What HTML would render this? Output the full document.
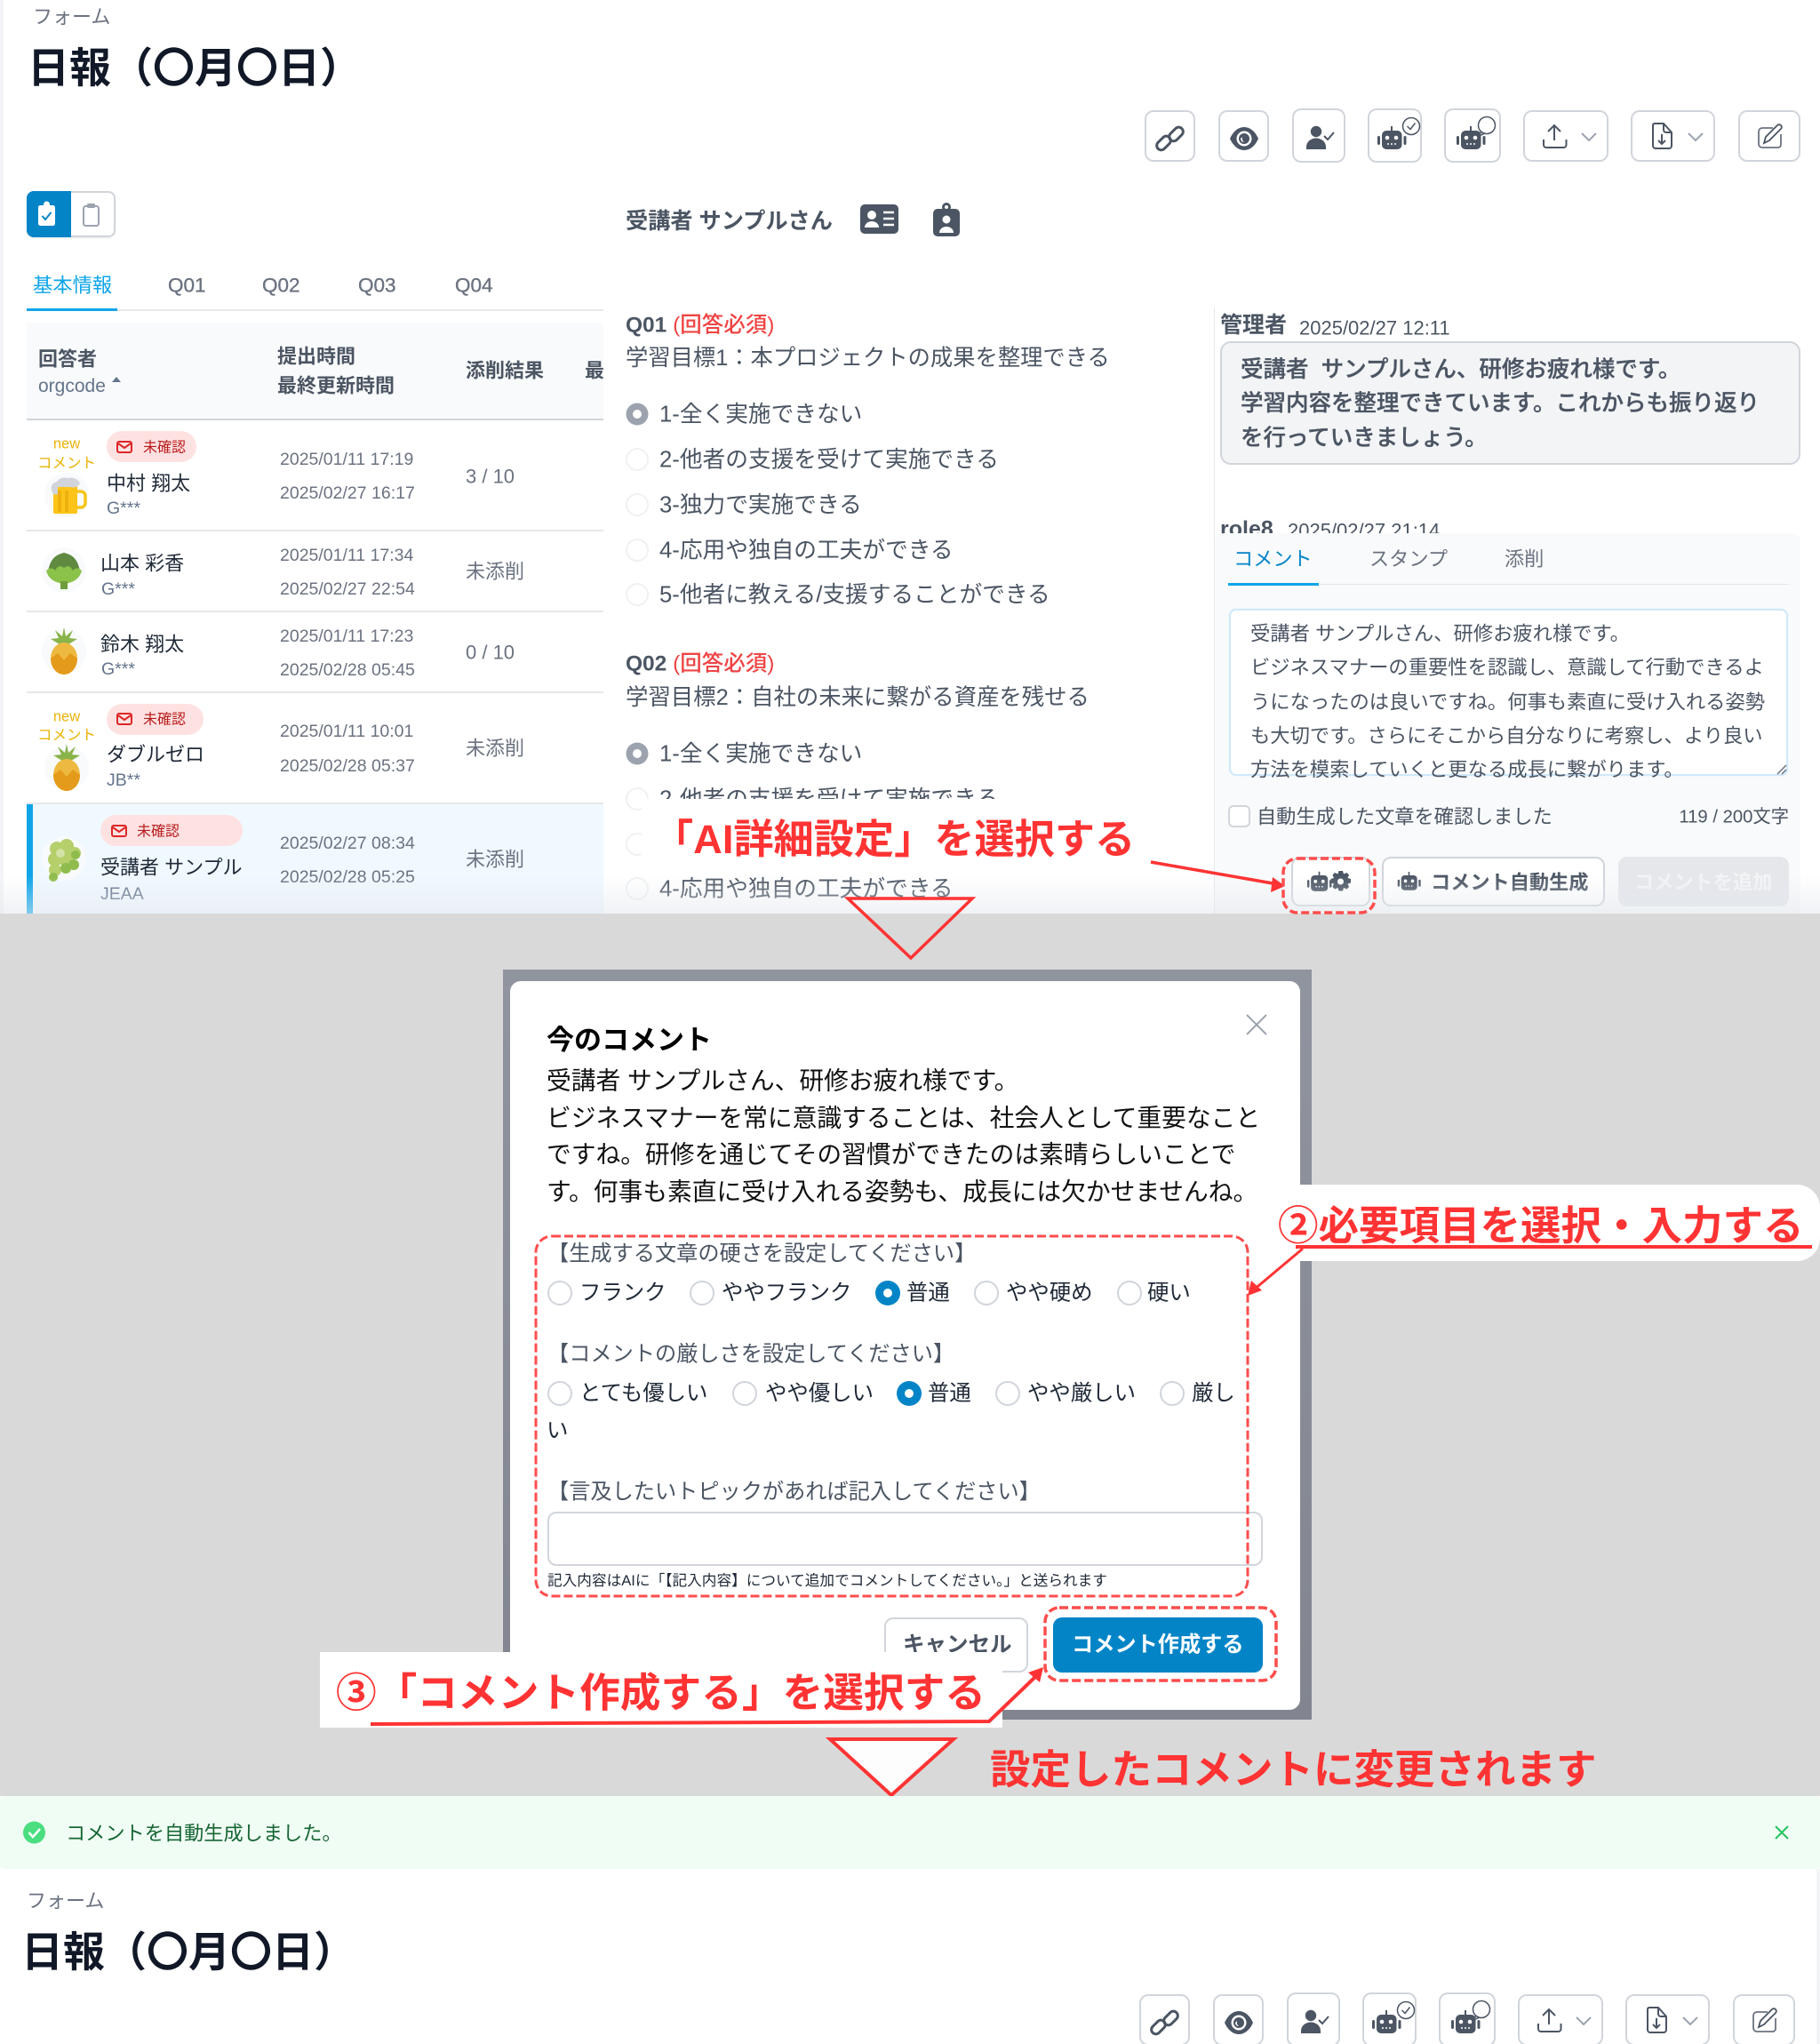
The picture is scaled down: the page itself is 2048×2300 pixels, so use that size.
<!DOCTYPE html>
<html lang="ja"><head><meta charset="utf-8"><title>日報</title>
<style>
html,body{margin:0;padding:0}
body{width:2048px;height:2300px;position:relative;overflow:hidden;background:#fff;font-family:"Liberation Sans","Noto Sans CJK JP",sans-serif;color:#4b5563}
.t{position:absolute;white-space:nowrap;line-height:1;transform:translateY(calc(-50% + 1.5px))}
.b{font-weight:700}
.m{font-weight:500;-webkit-text-stroke:.35px currentColor}
.box{position:absolute;box-sizing:border-box}
svg{position:absolute;left:0;top:0;overflow:visible}
.q{font-size:25.7px;left:742px;color:#4b5563}
.d{font-size:19.5px;left:315px;color:#6b7280}
.n{font-size:22px;color:#1f2937}
.g{font-size:19.5px;color:#64748b}
.r{font-size:22px;left:524px;color:#6b7280}
.h{font-size:22px;font-weight:700;color:#4b5563}
.new{font-size:16.5px;color:#eab308;width:70px;text-align:center;left:40px}
.bd{font-size:16px;color:#b91c1c}
.mr{font-size:24.4px;color:#1f2937}
.lb{font-size:24.2px;color:#4b5563}
.an{color:#ff3333;font-weight:700;font-size:45px}
</style></head><body>

<!-- left strip -->
<div class="box" style="left:0;top:0;width:4px;height:1028px;background:#f3f4f6"></div>

<!-- page header -->
<div class="t" style="left:37px;top:18px;font-size:22px;color:#6b7280">フォーム</div>
<div class="t b" style="left:31px;top:75px;font-size:47px;color:#111827">日報（〇月〇日）</div>

<!-- toggle -->
<div class="box" style="left:30px;top:215px;width:100px;height:52px;border-radius:8px;border:2px solid #d1d5db;background:#fff;box-shadow:0 1px 2px rgba(0,0,0,.08)"></div>
<div class="box" style="left:30px;top:215px;width:50px;height:52px;border-radius:8px 0 0 8px;background:#0284c7"></div>

<!-- presenter -->
<div class="t b" style="left:704px;top:248px;font-size:25.2px;color:#4b5563">受講者 サンプルさん</div>

<!-- tabs -->
<div class="t" style="left:37px;top:320px;font-size:22.3px;color:#0ea5e9">基本情報</div>
<div class="t m" style="left:189px;top:320px;font-size:22.5px;color:#6b7280">Q01</div>
<div class="t m" style="left:295px;top:320px;font-size:22.5px;color:#6b7280">Q02</div>
<div class="t m" style="left:403px;top:320px;font-size:22.5px;color:#6b7280">Q03</div>
<div class="t m" style="left:512px;top:320px;font-size:22.5px;color:#6b7280">Q04</div>
<div class="box" style="left:30px;top:348px;width:649px;height:2px;background:#e5e7eb"></div>
<div class="box" style="left:30px;top:347px;width:102px;height:3px;background:#0ea5e9"></div>

<!-- table -->
<div class="box" style="left:30px;top:363px;width:649px;height:108px;background:#f9fafb"></div>
<div class="box" style="left:30px;top:471px;width:649px;height:2px;background:#d1d5db"></div>
<div class="box" style="left:30px;top:596px;width:649px;height:2px;background:#e5e7eb"></div>
<div class="box" style="left:30px;top:687px;width:649px;height:2px;background:#e5e7eb"></div>
<div class="box" style="left:30px;top:778px;width:649px;height:2px;background:#e5e7eb"></div>
<div class="box" style="left:30px;top:903px;width:649px;height:2px;background:#e5e7eb"></div>
<div class="box" style="left:30px;top:905px;width:649px;height:123px;background:#f0f9ff"></div>
<div class="box" style="left:30px;top:905px;width:7px;height:123px;background:#0ea5e9"></div>

<div class="t h" style="left:43px;top:403px">回答者</div>
<div class="t" style="left:43px;top:433px;font-size:21px;color:#64748b">orgcode</div>
<div class="t h" style="left:312px;top:400px">提出時間</div>
<div class="t h" style="left:312px;top:433px">最終更新時間</div>
<div class="t h" style="left:524px;top:416px">添削結果</div>
<div style="position:absolute;left:658px;top:400px;width:21px;height:34px;overflow:hidden"><span class="t h" style="left:0;top:16px">最終</span></div>

<div class="t new" style="top:498px">new</div><div class="t new" style="top:520px">コメント</div>
<div class="box" style="left:120px;top:485px;width:101px;height:35px;border-radius:18px;background:#fee2e2"></div>
<div class="t bd" style="left:161px;top:503px">未確認</div>
<div class="t n" style="left:120px;top:543px">中村 翔太</div><div class="t g" style="left:120px;top:571px">G***</div>

<div class="t n" style="left:113px;top:633px">山本 彩香</div><div class="t g" style="left:114px;top:662px">G***</div>
<div class="t n" style="left:113px;top:724px">鈴木 翔太</div><div class="t g" style="left:114px;top:752px">G***</div>

<div class="t new" style="top:805px">new</div><div class="t new" style="top:826px">コメント</div>
<div class="box" style="left:120px;top:792px;width:109px;height:35px;border-radius:18px;background:#fee2e2"></div>
<div class="t bd" style="left:161px;top:809px">未確認</div>
<div class="t n" style="left:120px;top:848px">ダブルゼロ</div><div class="t g" style="left:120px;top:877px">JB**</div>

<div class="box" style="left:113px;top:917px;width:160px;height:35px;border-radius:18px;background:#fee2e2"></div>
<div class="t bd" style="left:154px;top:935px">未確認</div>
<div class="t n" style="left:113px;top:975px">受講者 サンプル</div><div class="t g" style="left:113px;top:1005px">JEAA</div>

<div class="t d" style="top:516px">2025/01/11 17:19</div><div class="t d" style="top:554px">2025/02/27 16:17</div>
<div class="t d" style="top:624px">2025/01/11 17:34</div><div class="t d" style="top:662px">2025/02/27 22:54</div>
<div class="t d" style="top:715px">2025/01/11 17:23</div><div class="t d" style="top:753px">2025/02/28 05:45</div>
<div class="t d" style="top:822px">2025/01/11 10:01</div><div class="t d" style="top:861px">2025/02/28 05:37</div>
<div class="t d" style="top:948px">2025/02/27 08:34</div><div class="t d" style="top:986px">2025/02/28 05:25</div>

<div class="t r" style="top:535px">3 / 10</div>
<div class="t r" style="top:642px">未添削</div>
<div class="t r" style="top:733px">0 / 10</div>
<div class="t r" style="top:841px">未添削</div>
<div class="t r" style="top:966px">未添削</div>

<!-- questions -->
<div class="t b" style="left:704px;top:365px;font-size:24.5px;color:#4b5563">Q01 <span style="color:#ef4444;font-weight:500">(回答必須)</span></div>
<div class="t" style="left:704px;top:402px;font-size:25.3px">学習目標1：本プロジェクトの成果を整理できる</div>
<div class="t q" style="top:466px">1-全く実施できない</div>
<div class="t q" style="top:517px">2-他者の支援を受けて実施できる</div>
<div class="t q" style="top:568px">3-独力で実施できる</div>
<div class="t q" style="top:619px">4-応用や独自の工夫ができる</div>
<div class="t q" style="top:669px">5-他者に教える/支援することができる</div>
<div class="t b" style="left:704px;top:746px;font-size:24.5px;color:#4b5563">Q02 <span style="color:#ef4444;font-weight:500">(回答必須)</span></div>
<div class="t" style="left:704px;top:784px;font-size:25.4px">学習目標2：自社の未来に繋がる資産を残せる</div>
<div class="t q" style="top:848px">1-全く実施できない</div>
<div class="t q" style="top:899px">2-他者の支援を受けて実施できる</div>
<div class="t q" style="top:1000px">4-応用や独自の工夫ができる</div>

<!-- right column -->
<div class="box" style="left:1366px;top:346px;width:1px;height:682px;background:#e5e7eb"></div>
<div class="t b" style="left:1373px;top:365px;font-size:25px">管理者</div>
<div class="t" style="left:1462px;top:368px;font-size:22px">2025/02/27 12:11</div>
<div class="box" style="left:1373px;top:384px;width:653px;height:139px;background:#f3f4f6;border:2px solid #d1d5db;border-radius:12px"></div>
<div class="t m" style="left:1396px;top:415px;font-size:25.5px">受講者&nbsp; サンプルさん、研修お疲れ様です。</div>
<div class="t m" style="left:1396px;top:453px;font-size:25.5px">学習内容を整理できています。これからも振り返り</div>
<div class="t m" style="left:1396px;top:492px;font-size:25.5px">を行っていきましょう。</div>
<div class="t b" style="left:1373px;top:594px;font-size:25px;line-height:1.2">role8</div>
<div class="t" style="left:1449px;top:596px;font-size:22px">2025/02/27 21:14</div>

<div class="box" style="left:1367px;top:600px;width:659px;height:428px;background:#f9fafb;border-radius:10px 10px 0 0"></div>
<div class="t" style="left:1388px;top:628px;font-size:22.2px;color:#0284c7">コメント</div>
<div class="t" style="left:1541px;top:628px;font-size:22.2px;color:#6b7280">スタンプ</div>
<div class="t" style="left:1693px;top:628px;font-size:22.2px;color:#6b7280">添削</div>
<div class="box" style="left:1382px;top:657px;width:631px;height:1px;background:#e5e7eb"></div>
<div class="box" style="left:1382px;top:656px;width:102px;height:3px;background:#0ea5e9"></div>
<div class="box" style="left:1383px;top:685px;width:629px;height:188px;background:#fff;border:2px solid #cfe8fa;border-radius:8px;box-shadow:0 0 2px #e0f2fe"></div>
<div style="position:absolute;left:1383px;top:685px;width:629px;height:190px;overflow:hidden">
<div class="t" style="left:24px;top:27px;font-size:22.3px">受講者 サンプルさん、研修お疲れ様です。</div>
<div class="t" style="left:24px;top:65px;font-size:22.3px">ビジネスマナーの重要性を認識し、意識して行動できるよ</div>
<div class="t" style="left:24px;top:104px;font-size:22.3px">うになったのは良いですね。何事も素直に受け入れる姿勢</div>
<div class="t" style="left:24px;top:142px;font-size:22.3px">も大切です。さらにそこから自分なりに考察し、より良い</div>
<div class="t" style="left:24px;top:180px;font-size:22.3px">方法を模索していくと更なる成長に繋がります。</div>
</div>
<div class="box" style="left:1382px;top:906px;width:25px;height:25px;background:#fff;border:2px solid #d1d5db;border-radius:6px"></div>
<div class="t" style="left:1414px;top:918px;font-size:22.2px">自動生成した文章を確認しました</div>
<div class="t" style="right:35px;top:918px;font-size:20.3px">119 / 200文字</div>

<div class="box" style="left:1453px;top:964px;width:89px;height:56px;background:#fff;border:2px solid #d1d5db;border-radius:10px"></div>
<div class="box" style="left:1555px;top:964px;width:251px;height:56px;background:#fff;border:2px solid #d1d5db;border-radius:10px"></div>
<div class="t b" style="left:1610px;top:992px;font-size:22.2px">コメント自動生成</div>
<div class="box" style="left:1821px;top:964px;width:192px;height:56px;background:#e5e7eb;border-radius:10px"></div>
<div class="t b" style="left:1839px;top:992px;font-size:22.2px;color:#f3f4f6">コメントを追加</div>

<!-- icons and shapes -->
<svg width="2048" height="2300" viewBox="0 0 2048 2300">
<defs>
<g id="rb" fill="#4b5563">
<rect x="-1" y="-5" width="2" height="6"/>
<rect x="-11" y="0" width="22.5" height="21" rx="5"/>
<rect x="-16" y="6" width="3" height="10" rx="1.5"/>
<rect x="13.5" y="6" width="3" height="10" rx="1.5"/>
<circle cx="-5" cy="8" r="2.3" fill="#fff"/><circle cx="5" cy="8" r="2.3" fill="#fff"/>
<circle cx="-4" cy="15" r="1" fill="#fff"/><circle cx="0" cy="15" r="1" fill="#fff"/><circle cx="4" cy="15" r="1" fill="#fff"/>
</g>
<g id="mail" fill="none" stroke="#dc2626" stroke-width="2">
<rect x="0" y="0" width="16" height="12" rx="2"/><path d="M1 2 L8 7 L15 2"/>
</g>
<g id="pine">
<path d="M0 -5 L-15 -14 L-6 -15 L-10 -24 L-2 -17 L0 -27 L2 -17 L10 -24 L6 -15 L15 -14Z" fill="#8ab44a"/>
<ellipse cx="0" cy="8" rx="15" ry="18" fill="#eeb940"/>
<path d="M-15 8 A15 18 0 0 0 15 8 L7 2 L0 10 L-7 2Z" fill="#e49a1b"/>
</g>
<g id="tb">
<g fill="#fff" stroke="#d1d5db" stroke-width="2">
<rect x="1289" y="125" width="55" height="56" rx="9"/>
<rect x="1372" y="125" width="55" height="56" rx="9"/>
<rect x="1455" y="123" width="58" height="59" rx="9"/>
<rect x="1540" y="123" width="59" height="59" rx="9"/>
<rect x="1626" y="123" width="62" height="59" rx="9"/>
<rect x="1715" y="125" width="94" height="56" rx="9"/>
<rect x="1836" y="125" width="93" height="56" rx="9"/>
<rect x="1957" y="125" width="68" height="56" rx="9"/>
</g>
<g fill="none" stroke="#4b5563" stroke-width="3">
<rect x="1300.500" y="156" width="18" height="10" rx="5" transform="rotate(-45 1309.500 161)"/>
<rect x="1314.500" y="146" width="18" height="10" rx="5" transform="rotate(-45 1323.500 151)"/>
</g>
<path d="M1384 156 C1388 147 1394 143 1400 143 C1406 143 1412 147 1416 156 C1412 165 1406 169 1400 169 C1394 169 1388 165 1384 156Z" fill="#4b5563"/>
<circle cx="1400" cy="156" r="8.500" fill="#fff"/><circle cx="1400" cy="156" r="6" fill="#4b5563"/>
<path d="M1396 156 a4 4 0 0 0 4 4 a6 6 0 0 1 -2 -6z" fill="#fff"/>
<circle cx="1481" cy="148" r="6.200" fill="#4b5563"/>
<path d="M1470 168 v-3 a11 9.500 0 0 1 22 0 v3z" fill="#4b5563"/>
<path d="M1490 153 l4 4 l7 -8" fill="none" stroke="#4b5563" stroke-width="2"/>
<use href="#rb" x="1566" y="147"/>
<circle cx="1588" cy="142" r="9.500" fill="#fff" stroke="#4b5563" stroke-width="1.500"/>
<path d="M1583.500 142 l3.500 3.500 l5.500 -7" fill="none" stroke="#4b5563" stroke-width="1.500"/>
<use href="#rb" x="1655" y="147"/>
<path d="M1667 148 L1664 153 L1671 150" fill="#fff" stroke="#4b5563" stroke-width="1.500"/>
<circle cx="1673" cy="141" r="9.500" fill="#fff" stroke="#4b5563" stroke-width="1.500"/>
<path d="M1749 158 V141 M1742 148 L1749 141 L1756 148 M1737 157 v6 a3 3 0 0 0 3 3 h19.500 a3 3 0 0 0 3 -3 v-6" fill="none" stroke="#4b5563" stroke-width="2"/>
<path d="M1780 150 l8 8 l8 -8 M1900 150 l8 8 l8 -8" fill="none" stroke="#9ca3af" stroke-width="2"/>
<path d="M1860 141 q0 -2 2 -2 h10 l9 10 v15 a3 3 0 0 1 -3 3 h-15 a3 3 0 0 1 -3 -3z M1872 139 v7 a3 3 0 0 0 3 3 h6 M1870 151 v11 M1866 158 l4 4 l4 -4" fill="none" stroke="#4b5563" stroke-width="2"/>
<path d="M1995 144 h-12 a4 4 0 0 0 -4 4 v14 a4 4 0 0 0 4 4 h18 a3.500 3.500 0 0 0 3 -3 v-12" fill="none" stroke="#6b7280" stroke-width="1.800"/>
<path d="M1985 161 l2 -7 L2000 141 a2.500 2.500 0 0 1 4 4 L1991 158z" fill="#fff" stroke="#4b5563" stroke-width="1.800"/>
</g>
</defs>
<use href="#tb"/>

<!-- toggle icons -->
<rect x="43" y="231" width="19" height="23" rx="2.500" fill="#fff"/>
<circle cx="52.500" cy="230" r="3.500" fill="#fff"/>
<path d="M47.500 243 l3.500 4 l6.500 -8" fill="none" stroke="#0284c7" stroke-width="2"/>
<rect x="94" y="232" width="17" height="22" rx="2.500" fill="#fff" stroke="#9ca3af" stroke-width="2"/>
<rect x="98" y="229" width="9" height="5" rx="1.500" fill="#9ca3af"/>

<!-- id card -->
<rect x="968" y="230" width="43" height="33" rx="5" fill="#4b5563"/>
<circle cx="981" cy="242" r="5" fill="#fff"/>
<path d="M973 256 a8 7 0 0 1 16 0z" fill="#fff"/>
<path d="M994 239 h12 M994 246 h12 M994 253 h12" stroke="#fff" stroke-width="2.500"/>
<!-- clipboard user -->
<rect x="1050" y="235" width="30" height="31" rx="5" fill="#4b5563"/>
<circle cx="1065" cy="233" r="5" fill="#4b5563"/><circle cx="1065" cy="233" r="2" fill="#fff"/>
<circle cx="1065" cy="247" r="4.500" fill="#fff"/>
<path d="M1057 262 a8 7 0 0 1 16 0z" fill="#fff"/>

<!-- sort -->
<path d="M126 430 L131 424 L136 430Z" fill="#64748b"/>

<!-- mail icons -->
<use href="#mail" x="132" y="497"/><use href="#mail" x="132" y="803"/><use href="#mail" x="126" y="929"/>

<!-- avatars -->
<g fill="#f8fafc"><circle cx="75" cy="557" r="25"/><circle cx="72" cy="642" r="25"/><circle cx="72" cy="733" r="25"/><circle cx="75" cy="864" r="25"/><circle cx="72" cy="966" r="25"/></g>
<path d="M86 553 h5 a5 5 0 0 1 5 5 v8 a5 5 0 0 1 -5 5 h-5" fill="none" stroke="#f5c518" stroke-width="3.500"/>
<rect x="60" y="546" width="27" height="32" rx="2" fill="#fcc419"/>
<path d="M67 552 v24 M75 552 v24" stroke="#eeb010" stroke-width="4"/>
<path d="M58 552 q-2 -8 6 -10 q4 -6 12 -4 q10 -2 14 6 q-3 6 -12 4 h-13 v8 q-5 2 -7 -4z" fill="#d1d5db"/>

<path d="M72 622 q16 3 18 22 l-36 0 q2 -19 18 -22z" fill="#5f8a3f"/>
<path d="M52 642 q6 -5 10 0 q4 -8 10 -3 q6 -5 10 3 q4 -5 10 0 q-3 13 -20 15 q-17 -2 -20 -15z" fill="#8bc34a"/>
<rect x="68" y="654" width="8" height="9" fill="#6f9d3b"/>

<use href="#pine" x="72" y="733"/>
<use href="#pine" x="75" y="864"/>

<g fill="#b5cf6b">
<circle cx="64" cy="955" r="8"/><circle cx="75" cy="952" r="8"/><circle cx="84" cy="960" r="7"/><circle cx="62" cy="967" r="8"/><circle cx="73" cy="965" r="9"/><circle cx="62" cy="979" r="7"/>
</g>
<g fill="#8fbc4c"><circle cx="85" cy="962" r="5"/><circle cx="83" cy="973" r="6"/><circle cx="74" cy="977" r="6"/><circle cx="60" cy="987" r="5"/></g>
<circle cx="68" cy="960" r="5" fill="#d3e2a6"/>

<!-- radios under annotation -->
<g fill="#fff" stroke="#f0f1f3" stroke-width="2">
<circle cx="717" cy="517" r="12"/><circle cx="717" cy="568" r="12"/><circle cx="717" cy="619" r="12"/><circle cx="717" cy="669" r="12"/>
<circle cx="717" cy="899" r="12"/><circle cx="717" cy="950" r="12"/><circle cx="717" cy="1000" r="12"/>
</g>
<circle cx="717" cy="466" r="12.500" fill="#9ca3af"/><circle cx="717" cy="466" r="5" fill="#fff"/>
<circle cx="717" cy="848" r="12.500" fill="#9ca3af"/><circle cx="717" cy="848" r="5" fill="#fff"/>

<!-- resize handle -->
<path d="M2000 871 L2010 861 M2005 871 L2010 866" stroke="#6b7280" stroke-width="1.500"/>

<!-- button robots -->
<use href="#rb" transform="translate(1484.500 985) scale(.85)"/>
<use href="#rb" transform="translate(1585.500 985) scale(.8)"/>
<path d="M1508 980 l3 0 l1 3.500 l3.500 -1.500 l2.500 2.500 l-1.500 3.500 l3.500 1 l0 4.500 l-3.500 1 l1.500 3.500 l-2.500 2.500 l-3.500 -1.500 l-1 3.500 l-4.500 0 l-1 -3.500 l-3.500 1.500 l-2.500 -2.500 l1.500 -3.500 l-3.500 -1 l0 -4.500 l3.500 -1 l-1.500 -3.500 l2.500 -2.500 l3.500 1.500 l1 -3.500z" fill="#4b5563"/>
<circle cx="1508.500" cy="992" r="3.500" fill="#fff"/>
</svg>

<!-- fade -->
<div class="box" style="left:0;top:985px;width:2048px;height:43px;background:linear-gradient(rgba(255,255,255,0),rgba(228,232,238,.55))"></div>

<!-- annotation 1 white cover -->
<div class="box" style="left:722px;top:899px;width:570px;height:86px;background:#fff"></div>
<div class="t an" style="left:735px;top:943px;font-size:45.2px">「AI詳細設定」を選択する</div>

<!-- grey section -->
<div class="box" style="left:0;top:1028px;width:2048px;height:993px;background:#d9d9d9"></div>
<div class="box" style="left:566px;top:1091px;width:910px;height:844px;background:linear-gradient(#90949f,#82858f)"></div>
<div class="box" style="left:574px;top:1104px;width:889px;height:820px;background:#fff;border-radius:12px"></div>

<div class="t b" style="left:615px;top:1169px;font-size:31px;color:#000">今のコメント</div>
<div class="t mr" style="left:615px;top:1215px;font-size:27.75px;color:#111">受講者 サンプルさん、研修お疲れ様です。</div>
<div class="t mr" style="left:615px;top:1257px;font-size:27.75px;color:#111">ビジネスマナーを常に意識することは、社会人として重要なこと</div>
<div class="t mr" style="left:615px;top:1298px;font-size:27.75px;color:#111">ですね。研修を通じてその習慣ができたのは素晴らしいことで</div>
<div class="t mr" style="left:615px;top:1340px;font-size:27.75px;color:#111">す。何事も素直に受け入れる姿勢も、成長には欠かせませんね。</div>

<div class="t lb" style="left:616px;top:1410px">【生成する文章の硬さを設定してください】</div>
<div class="t mr" style="left:652px;top:1454px">フランク</div>
<div class="t mr" style="left:812px;top:1454px">ややフランク</div>
<div class="t mr" style="left:1020px;top:1454px">普通</div>
<div class="t mr" style="left:1132px;top:1454px">やや硬め</div>
<div class="t mr" style="left:1291px;top:1454px">硬い</div>

<div class="t lb" style="left:616px;top:1523px">【コメントの厳しさを設定してください】</div>
<div class="t mr" style="left:652px;top:1567px">とても優しい</div>
<div class="t mr" style="left:861px;top:1567px">やや優しい</div>
<div class="t mr" style="left:1044px;top:1567px">普通</div>
<div class="t mr" style="left:1156px;top:1567px">やや厳しい</div>
<div class="t mr" style="left:1341px;top:1567px">厳し</div>
<div class="t mr" style="left:615px;top:1609px">い</div>

<div class="t lb" style="left:616px;top:1678px">【言及したいトピックがあれば記入してください】</div>
<div class="box" style="left:616px;top:1701px;width:805px;height:61px;background:#fff;border:2px solid #d1d5db;border-radius:10px"></div>
<div class="t" style="left:616px;top:1778px;font-size:16.65px;color:#1f2937">記入内容はAIに「【記入内容】について追加でコメントしてください。」と送られます</div>

<div class="box" style="left:995px;top:1820px;width:162px;height:62px;background:#fff;border:2px solid #d1d5db;border-radius:10px"></div>
<div class="t b" style="left:1016px;top:1850px;font-size:24.5px">キャンセル</div>
<div class="box" style="left:1185px;top:1820px;width:236px;height:62px;background:#0284c7;border-radius:10px"></div>
<div class="t b" style="left:1206px;top:1850px;font-size:24.2px;color:#fff">コメント作成する</div>

<!-- annotation 2 -->
<div class="box" style="left:1463px;top:1333px;width:585px;height:86px;background:#fff;border-radius:0 26px 26px 0"></div>
<!-- annotation 3 white -->
<div class="box" style="left:360px;top:1859px;width:768px;height:85px;background:#fff"></div>

<svg width="2048" height="2300" viewBox="0 0 2048 2300">
<!-- first triangle -->
<path d="M954 1011 H1094 L1025 1078Z" fill="none" stroke="#ff3333" stroke-width="3.500"/>
<!-- arrow 1 -->
<path d="M1295 970 L1438 995" stroke="#ff3333" stroke-width="3.500" fill="none"/>
<path d="M1446 997 L1430 1004 L1432 987Z" fill="#ff3333"/>
<rect x="1444" y="966" width="103" height="61" rx="16" fill="none" stroke="#ff4d4d" stroke-width="3.500" stroke-dasharray="9 4"/>
<!-- modal close -->
<path d="M1403 1142 L1425 1164 M1425 1142 L1403 1164" stroke="#9ca3af" stroke-width="2"/>
<!-- modal radios -->
<g fill="#fff" stroke="#d1d5db" stroke-width="2">
<circle cx="630" cy="1455" r="13"/><circle cx="790" cy="1455" r="13"/><circle cx="1110" cy="1455" r="13"/><circle cx="1271" cy="1455" r="13"/>
<circle cx="630" cy="1568" r="13"/><circle cx="838" cy="1568" r="13"/><circle cx="1134" cy="1568" r="13"/><circle cx="1319" cy="1568" r="13"/>
</g>
<circle cx="999" cy="1455" r="14" fill="#0284c7"/><circle cx="999" cy="1455" r="5" fill="#fff"/>
<circle cx="1023" cy="1568" r="14" fill="#0284c7"/><circle cx="1023" cy="1568" r="5" fill="#fff"/>
<!-- dashed boxes -->
<rect x="603" y="1391" width="801" height="405" rx="18" fill="none" stroke="#ff4d4d" stroke-width="3" stroke-dasharray="10 4"/>
<rect x="1176" y="1809" width="260" height="82" rx="16" fill="none" stroke="#ff4d4d" stroke-width="3.500" stroke-dasharray="10 4"/>
<!-- annotation 2 lines -->
<path d="M1458 1403 H2039" stroke="#ff3333" stroke-width="4"/>
<path d="M1466 1405 L1410 1452" stroke="#ff3333" stroke-width="3"/>
<path d="M1404 1458 L1408 1441 L1420 1452Z" fill="#ff3333"/>
<!-- annotation 3 lines -->
<path d="M417 1940 L1113 1937 L1168 1884" fill="none" stroke="#ff3333" stroke-width="4"/>
<path d="M1174 1876 L1170 1893 L1157 1882Z" fill="#ff3333"/>
<!-- triangle 2 -->
<path d="M934 1957 H1073 L1003 2020Z" fill="#fdfdfd" stroke="#ff3333" stroke-width="4"/>
</svg>

<div class="t an" style="left:1438px;top:1378px;font-size:45.500px">②必要項目を選択・入力する</div>
<div class="t an" style="left:378px;top:1904px;font-size:45.700px">③「コメント作成する」を選択する</div>
<div class="t an" style="left:1114px;top:1990px;font-size:45.500px">設定したコメントに変更されます</div>

<!-- alert -->
<div class="box" style="left:0;top:2021px;width:2048px;height:82px;background:#f0fdf4;border-radius:4px"></div>
<div class="t" style="left:74px;top:2062px;font-size:22.2px;color:#166534">コメントを自動生成しました。</div>

<!-- bottom header -->
<div class="box" style="left:2044px;top:2103px;width:4px;height:197px;background:#f3f4f6"></div>
<div class="t" style="left:30px;top:2138px;font-size:22px;color:#6b7280">フォーム</div>
<div class="t b" style="left:24px;top:2195px;font-size:47px;color:#111827">日報（〇月〇日）</div>

<svg width="2048" height="2300" viewBox="0 0 2048 2300">
<circle cx="38.500" cy="2062" r="12.500" fill="#4ade80"/>
<path d="M32.500 2062 l4.500 5 l8 -9" fill="none" stroke="#fff" stroke-width="2.500"/>
<path d="M1998 2055 L2012 2069 M2012 2055 L1998 2069" stroke="#22c55e" stroke-width="2"/>
<use href="#tb" transform="translate(-6 2120)"/>
</svg>
</body></html>
